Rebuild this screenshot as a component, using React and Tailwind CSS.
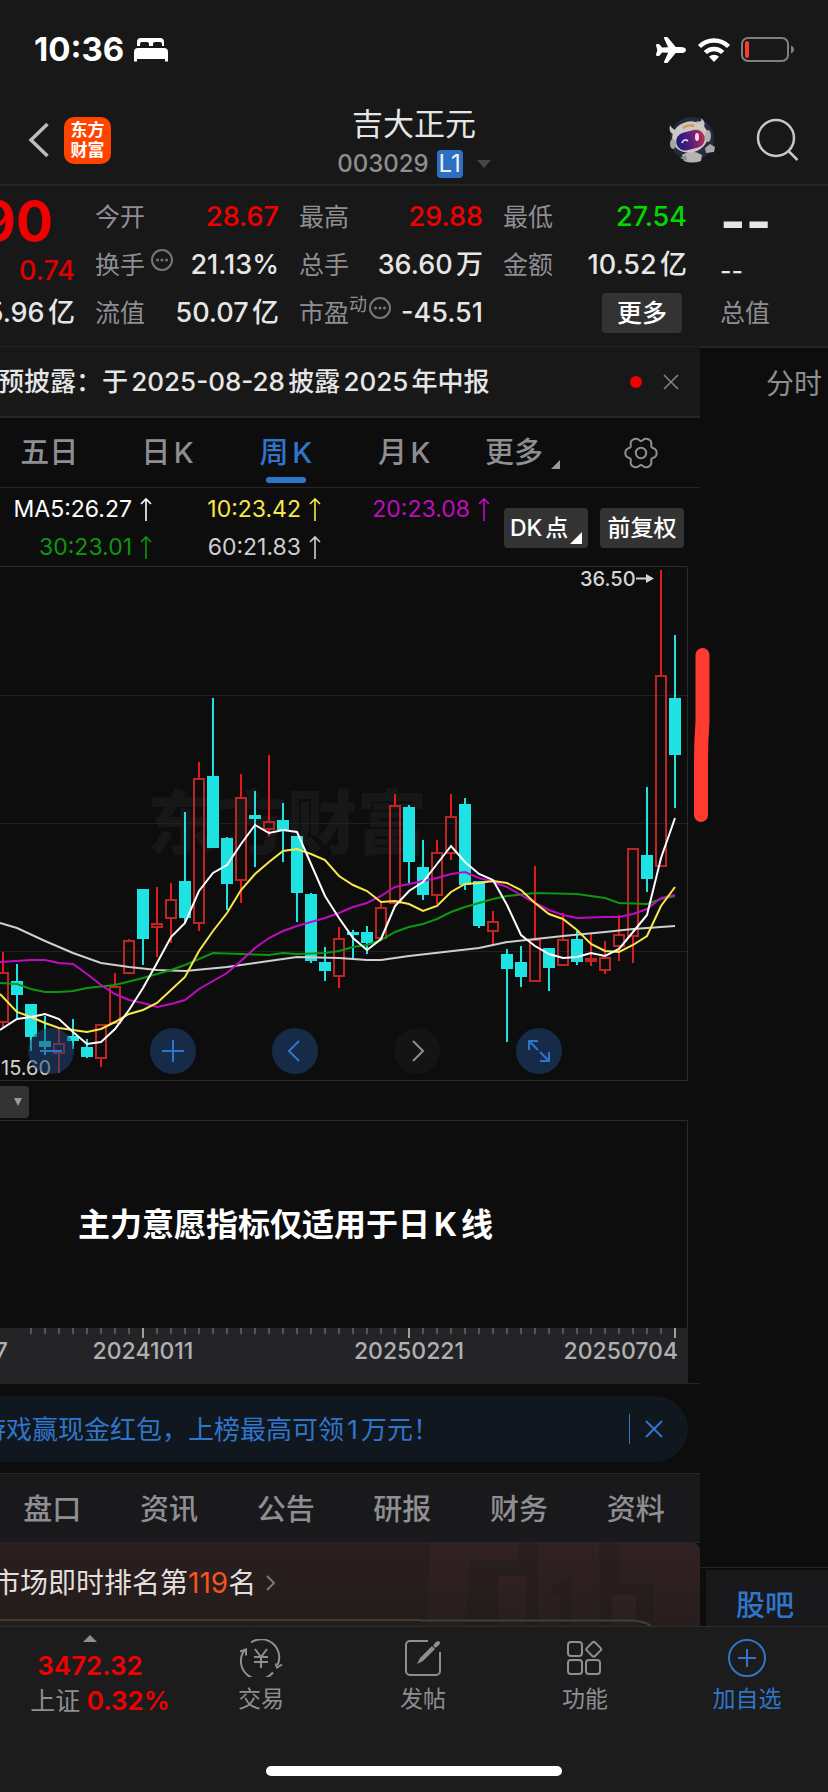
import { IoAirplane } from "react-icons/io5";

const UP = "up";
const DOWN = "down";

// [tipo, máximo, inicio del cuerpo, fin del cuerpo, mínimo]
const CANDLES = [
  [UP, 952, 972, 1023, 1028],
  [DOWN, 964, 981, 995, 1018],
  [DOWN, 1004, 1004, 1037, 1051],
  [DOWN, 1016, 1041, 1047, 1055],
  [UP, 1028, 1043, 1054, 1073],
  [DOWN, 1019, 1036, 1041, 1049],
  [DOWN, 1039, 1047, 1057, 1058],
  [UP, 1024, 1024, 1059, 1067],
  [UP, 973, 986, 1024, 1024],
  [UP, 939, 940, 974, 974],
  [DOWN, 889, 889, 939, 965],
  [UP, 887, 923, 928, 957],
  [UP, 883, 899, 919, 943],
  [DOWN, 812, 881, 918, 922],
  [UP, 762, 778, 924, 931],
  [DOWN, 698, 776, 848, 848],
  [DOWN, 837, 838, 884, 910],
  [UP, 774, 797, 881, 903],
  [DOWN, 791, 815, 819, 867],
  [UP, 755, 821, 830, 836],
  [DOWN, 803, 820, 830, 862],
  [DOWN, 836, 836, 893, 922],
  [DOWN, 893, 894, 961, 963],
  [DOWN, 947, 962, 971, 981],
  [UP, 927, 938, 977, 988],
  [DOWN, 930, 932, 935, 958],
  [DOWN, 926, 932, 943, 954],
  [UP, 901, 907, 939, 939],
  [UP, 794, 805, 904, 904],
  [DOWN, 805, 807, 862, 883],
  [DOWN, 840, 867, 895, 900],
  [UP, 840, 852, 896, 904],
  [UP, 794, 816, 854, 860],
  [DOWN, 798, 804, 885, 890],
  [DOWN, 881, 881, 926, 928],
  [UP, 911, 921, 932, 944],
  [DOWN, 949, 954, 969, 1042],
  [DOWN, 946, 962, 977, 987],
  [UP, 866, 939, 982, 982],
  [DOWN, 948, 948, 968, 991],
  [UP, 913, 939, 966, 966],
  [DOWN, 931, 939, 962, 965],
  [UP, 933, 958, 962, 966],
  [UP, 941, 957, 971, 974],
  [UP, 915, 934, 947, 961],
  [UP, 848, 848, 937, 963],
  [DOWN, 787, 855, 879, 892],
  [UP, 570, 675, 867, 867],
  [DOWN, 635, 698, 755, 808],
];

const AVERAGES = [
  {
    color: "#cfcfcf",
    points:
      "0,923 17,928 45,941 73,953 101,963 129,967 157,970 185,971 227,967 255,963 297,957 339,958 367,960 381,960 409,956 479,948 507,942 563,936 605,932 633,929 675,926",
  },
  {
    color: "#0c970c",
    points:
      "0,983 17,984 31,989 45,992 59,992 73,991 87,988 115,985 143,978 171,970 185,965 213,953 269,955 283,953 297,954 325,953 339,951 353,947 367,945 381,940 395,932 409,927 423,924 437,919 451,912 465,907 493,899 507,896 535,893 577,894 605,898 619,903 647,904 661,899 675,896",
  },
  {
    color: "#c00cc0",
    points:
      "0,962 31,960 45,960 59,963 73,964 87,974 101,985 115,994 129,1000 143,1003 157,1007 171,1004 185,1000 199,989 213,981 227,973 241,961 255,948 269,938 283,931 297,926 311,922 325,918 339,913 353,907 367,903 381,896 395,887 409,884 423,881 437,878 451,874 465,872 479,878 493,882 507,887 521,895 535,903 549,910 563,915 577,918 605,917 619,917 633,914 647,909 661,898 675,895",
  },
  {
    color: "#f8e84a",
    points:
      "0,994 17,1012 31,1017 45,1023 59,1028 73,1030 87,1032 101,1029 115,1022 129,1014 143,1010 157,1003 171,990 185,977 199,951 213,931 227,913 241,890 255,874 269,862 283,851 297,849 311,854 325,860 339,876 353,885 367,891 381,902 395,901 409,904 423,911 437,906 451,892 465,884 479,883 493,881 507,883 521,890 535,903 549,914 563,919 577,930 591,944 605,951 619,952 633,945 647,936 661,906 675,887",
  },
  {
    color: "#ffffff",
    points:
      "0,1030 17,1019 31,1017 45,1014 59,1019 73,1032 87,1044 101,1042 115,1029 129,1010 143,988 157,963 171,937 185,923 199,891 213,873 227,865 241,844 255,825 269,833 283,830 297,832 311,864 325,896 339,918 353,938 367,950 381,939 395,906 409,891 423,882 437,864 451,846 465,862 479,874 493,880 507,905 521,935 535,946 549,954 563,958 577,957 591,953 605,956 619,949 633,932 647,915 661,858 675,818",
  },
];

const candleX = (i) => 3 + i * 14;

const GEAR = Array.from({ length: 72 }, (_, i) => {
  const a = (i * Math.PI) / 36;
  const r = 14.2 + 1.8 * Math.cos(6 * a) - 0.4 * Math.cos(12 * a);
  return `${(17 + r * Math.cos(a)).toFixed(2)},${(17 + r * Math.sin(a)).toFixed(2)}`;
}).join(" ");

function StatusBar() {
  return (
    <div className="flex h-[100px] items-center justify-between pl-[34px] pr-[33px]">
      <div className="flex items-center gap-2.5 text-[33px] font-bold text-white">
        <span>10:36</span>
        <svg width="34" height="24" viewBox="0 0 34 24" fill="#fff">
          <path d="M3 8V4a4 4 0 0 1 4-4h19a4 4 0 0 1 4 4v4h-2V6q0-2-2-2h-5q-2 0-2 2v2h-4V6q0-2-2-2H8Q6 4 6 6v2z" />
          <path d="M4 10h26a4 4 0 0 1 4 4v9.500h-3V21H3v2.500H0V14a4 4 0 0 1 4-4z" />
        </svg>
      </div>
      <div className="flex items-center gap-2.5 text-white">
        <IoAirplane className="h-8 w-8" />
        <svg width="34" height="26" viewBox="0 0 34 26" fill="none" stroke="#fff" strokeWidth="4.500">
          <path d="M2.500 9.500a20.500 20.500 0 0 1 29 0" />
          <path d="M8.300 15.500a12.300 12.300 0 0 1 17.400 0" />
          <path d="M17 25l-5-5.200a7.200 7.200 0 0 1 10 0z" fill="#fff" stroke="none" />
        </svg>
        <svg width="54" height="26" viewBox="0 0 54 26">
          <rect x="1" y="1" width="46" height="23" rx="6" fill="none" stroke="#808080" strokeWidth="2" />
          <rect x="4" y="4" width="4" height="17" rx="2" fill="#ff3b30" />
          <path d="M50 8.500c4 1.500 4 6.500 0 8z" fill="#808080" />
        </svg>
      </div>
    </div>
  );
}

function Robot() {
  return (
    <svg width="48" height="46" viewBox="0 0 48 46">
      <circle cx="24" cy="22" r="22" fill="#262b3d" />
      <path d="M14 38q10-7 20 0l-1 6q-9 3-17 0z" fill="#b9b4b4" />
      <path d="M12 41l6-3 1 6z" fill="#8f8b8b" />
      <path d="M37 31l5-4 5 3-1 5-8 1z" fill="#aaa5a5" />
      <path d="M7 18Q0 16 2 8q3 6 8 5zM28 4q7 2 5-3 6 4 2 11z" fill="#c9c5c3" />
      <ellipse cx="22" cy="20" rx="18" ry="15.500" fill="#cdc8c6" transform="rotate(-14 22 20)" />
      <path d="M15 11q6-4 11-2" stroke="#c99b5a" strokeWidth="2.500" fill="none" />
      <ellipse cx="5" cy="27" rx="3" ry="5" fill="#a9a5a8" />
      <ellipse cx="40" cy="19" rx="3" ry="6" fill="#b4afb0" />
      <defs>
        <linearGradient id="visor">
          <stop offset="0" stopColor="#1c1a78" />
          <stop offset="0.500" stopColor="#5a1d80" />
          <stop offset="1" stopColor="#b8304f" />
        </linearGradient>
      </defs>
      <rect x="8" y="14" width="29" height="18" rx="9" fill="url(#visor)" transform="rotate(-14 23 23)" />
      <path d="M14 26q2-5 6-2" stroke="#dcd6ff" strokeWidth="1.800" fill="none" />
      <ellipse cx="29" cy="20" rx="2" ry="4" fill="#ffd9ee" />
    </svg>
  );
}

function Header() {
  return (
    <header className="grid h-[86px] grid-cols-3 items-center border-b-2 border-[#262626]">
      <div className="mb-1 flex items-center gap-3.5 pl-7">
        <button aria-label="返回">
          <svg width="22" height="36" viewBox="0 0 22 36" fill="none" stroke="#bdbdbd" strokeWidth="3.500">
            <path d="M19.500 2L3 18l16.500 16" />
          </svg>
        </button>
        <div className="flex h-[47px] w-[47px] flex-col items-center justify-center rounded-[10px] bg-[#ff4400] text-[17px] font-bold leading-5 text-white">
          <span>东方</span>
          <span>财富</span>
        </div>
      </div>
      <div className="flex flex-col items-center gap-2">
        <h1 className="text-[31px] leading-9 text-[#e6e6e6]">吉大正元</h1>
        <button className="flex items-center text-2xl leading-7 text-[#8e8e93]">
          <span className="font-medium">003029</span>
          <span className="ml-2 rounded bg-[#2c70c4] px-0.5 text-[#f0f0f0]">L1</span>
          <svg className="ml-3.5" width="14" height="8" viewBox="0 0 14 8" fill="#454545">
            <path d="M0 0h14L7 8z" />
          </svg>
        </button>
      </div>
      <div className="mb-1 flex items-center justify-end gap-10 pr-7">
        <Robot />
        <button aria-label="搜索">
          <svg width="44" height="44" viewBox="0 0 44 44" fill="none" stroke="#c6c6c6" strokeWidth="2.500">
            <circle cx="20" cy="20" r="18" />
            <path d="M32.500 33l9 9" />
          </svg>
        </button>
      </div>
    </header>
  );
}

function Info() {
  return (
    <svg className="mb-2.5" width="22" height="22" viewBox="0 0 22 22">
      <circle cx="11" cy="11" r="10" fill="none" stroke="#77777b" strokeWidth="2" />
      <circle cx="6.500" cy="11" r="1.500" fill="#77777b" />
      <circle cx="11" cy="11" r="1.500" fill="#77777b" />
      <circle cx="15.500" cy="11" r="1.500" fill="#77777b" />
    </svg>
  );
}

function Quote({ label, sup, info, value, color = "text-[#e6e6e6]" }) {
  return (
    <div className="flex items-center justify-between">
      <dt className="flex items-center text-[#8e8e93]">
        {label}
        {sup && <span className="mb-4 text-lg leading-5">{sup}</span>}
        {info && <span className={sup ? "ml-0.5" : "ml-1.5"}><Info /></span>}
      </dt>
      <dd className={`text-[27px] font-medium [text-autospace:normal] ${color}`}>{value}</dd>
    </div>
  );
}

function QuotePanel() {
  return (
    <section className="flex gap-5 border-b border-[#262626] bg-[#181818] pb-[9px] pr-[13px] pt-[7px] text-[25px] leading-[48px]">
      <div className="flex w-[75px] shrink-0 flex-col items-end whitespace-nowrap">
        <span className="mr-[22px] h-14 text-[55px] font-bold leading-14 text-[#f00000]">90</span>
        <span className="h-11 text-[27px] font-medium leading-11 text-[#e00000]">0.74</span>
        <span className="h-10 text-[27px] font-medium leading-10 text-[#e6e6e6] [text-autospace:normal]">5.96亿</span>
      </div>
      <dl className="min-w-0 flex-1">
        <Quote label="今开" value="28.67" color="text-[#f00000]" />
        <Quote label="换手" info value="21.13%" />
        <Quote label="流值" value="50.07亿" />
      </dl>
      <dl className="min-w-0 flex-1">
        <Quote label="最高" value="29.88" color="text-[#f00000]" />
        <Quote label="总手" value="36.60万" />
        <Quote label="市盈" sup="动" info value="-45.51" />
      </dl>
      <div className="min-w-0 flex-1">
        <dl>
          <Quote label="最低" value="27.54" color="text-[#00d800]" />
          <Quote label="金额" value="10.52亿" />
        </dl>
        <div className="flex h-12 items-center justify-end pr-[5px]">
          <button className="h-10 w-20 rounded bg-[#333333] font-medium leading-10 text-white">更多</button>
        </div>
      </div>
    </section>
  );
}

function Notice() {
  return (
    <section className="flex h-[71px] items-center border-b-2 border-[#262626] bg-[#181818] pr-5">
      <p className="-ml-0.5 flex-1 whitespace-nowrap text-[26px] font-medium text-[#e6e6e6] [text-autospace:normal]">
        预披露：于2025-08-28披露2025年中报
      </p>
      <span className="mr-5 h-3 w-3 rounded-full bg-[#f00000]" />
      <button aria-label="关闭">
        <svg width="18" height="18" viewBox="0 0 18 18" stroke="#858585" strokeWidth="1.500">
          <path d="M2 2l14 14M16 2L2 16" />
        </svg>
      </button>
    </section>
  );
}

function PeriodTabs() {
  return (
    <nav className="border-b border-[#262626]">
      <div className="-ml-2.5 grid h-[69px] grid-cols-6 text-[29px] font-medium text-[#8e8e93] [text-autospace:normal]">
        <button>五日</button>
        <button>日K</button>
        <button className="relative text-[#2f76cb]">
          周K
          <span className="absolute bottom-1 left-1/2 h-1.5 w-10 -translate-x-1/2 rounded-full bg-[#2f76cb]" />
        </button>
        <button>月K</button>
        <button className="flex items-center justify-center gap-2">
          更多
          <svg className="mt-6" width="9" height="9" viewBox="0 0 9 9" fill="#9a9a9e">
            <path d="M9 0v9H0z" />
          </svg>
        </button>
        <button aria-label="设置" className="flex items-center justify-center">
          <svg width="34" height="34" viewBox="0 0 34 34" fill="none" stroke="#8e8e93" strokeWidth="2">
            <polygon points={GEAR} strokeLinejoin="round" />
            <circle cx="17" cy="17" r="5.200" />
          </svg>
        </button>
      </div>
    </nav>
  );
}

function Average({ children, color }) {
  return (
    <span className={`flex items-center justify-end gap-2 ${color}`}>
      {children}
      <svg width="12" height="24" viewBox="0 0 12 24" fill="none" stroke="currentColor" strokeWidth="1.600">
        <path d="M6 24V2M1 7l5-5 5 5" />
      </svg>
    </span>
  );
}

function AveragesBar() {
  return (
    <section className="flex h-[78px] items-center pt-0.5">
      <div className="grid grid-cols-[152px_169px_169px] whitespace-nowrap text-[23px] leading-[38px]">
        <Average color="text-white">MA5:26.27</Average>
        <Average color="text-[#f8e84a]">10:23.42</Average>
        <Average color="text-[#c00cc0]">20:23.08</Average>
        <Average color="text-[#0c970c]">30:23.01</Average>
        <Average color="text-[#cfcfcf]">60:21.83</Average>
      </div>
      <div className="ml-3.5 flex gap-3 text-[23px] font-medium leading-10 text-white">
        <button className="relative h-10 w-[84px] rounded bg-[#333333] pl-1.5 text-left [text-autospace:normal]">
          DK点
          <svg className="absolute bottom-1 right-1.5" width="12" height="12" viewBox="0 0 12 12" fill="#fff">
            <path d="M12 0v12H0z" />
          </svg>
        </button>
        <button className="h-10 w-[84px] rounded bg-[#333333]">前复权</button>
      </div>
    </section>
  );
}

function RoundButton({ label, muted, children }) {
  return (
    <button
      aria-label={label}
      className={`flex h-[46px] w-[46px] items-center justify-center rounded-full ${
        muted ? "bg-[#141414] text-[#8e8e93]" : "bg-[#1f4679]/55 text-[#2f76cb]"
      }`}
    >
      <svg width="26" height="26" viewBox="0 0 26 26" fill="none" stroke="currentColor" strokeWidth="2">
        {children}
      </svg>
    </button>
  );
}

function Chart() {
  return (
    <section className="relative pr-3">
      <svg className="block w-full" viewBox="0 566 688 515">
        <text x="147" y="849" fill="#171717" fontSize="70" fontWeight="900">
          东方财富
        </text>
        <g stroke="#202020">
          <path d="M0 695.500h687M0 823.500h687M0 951.500h687" />
          <path d="M0 566.500h687.500v514H0" fill="none" stroke="#2a2a2a" />
        </g>
        {CANDLES.map(([kind, high, top, bottom, low], i) =>
          kind === UP ? (
            <g key={i}>
              <path d={`M${candleX(i)} ${high}V${top}M${candleX(i)} ${bottom}V${low}`} stroke="#e31a1a" strokeWidth="2" />
              <rect
                x={candleX(i) - 5}
                y={top + 1}
                width="10"
                height={bottom - top - 2}
                fill="none"
                stroke="#bd2525"
                strokeWidth="2"
              />
            </g>
          ) : (
            <g key={i} fill="#1fe3e3">
              <rect x={candleX(i) - 1} y={high} width="2" height={low - high} />
              <rect x={candleX(i) - 6} y={top} width="12" height={bottom - top} />
            </g>
          )
        )}
        {AVERAGES.map((line) => (
          <polyline key={line.color} points={line.points} fill="none" stroke={line.color} strokeWidth="2" />
        ))}
        <g fill="#d4d4d4" fontSize="20">
          <text x="580" y="586" fontWeight="500">36.50</text>
          <text x="1" y="1075">15.60</text>
        </g>
        <path d="M636 578.500h11" stroke="#d4d4d4" strokeWidth="2" />
        <path d="M646 574l8 4.500-8 4.500z" fill="#d4d4d4" />
      </svg>
      <div className="absolute bottom-[7px] left-7 flex gap-[76px]">
        <RoundButton label="缩小">
          <path d="M2 13h22" />
        </RoundButton>
        <RoundButton label="放大">
          <path d="M2 13h22M13 2v22" />
        </RoundButton>
        <RoundButton label="左移">
          <path d="M17 3L7 13l10 10" />
        </RoundButton>
        <RoundButton label="右移" muted>
          <path d="M9 3l10 10L9 23" />
        </RoundButton>
        <RoundButton label="全屏">
          <path d="M3 12V3h9M3 3l9 9M14 23h9v-9M23 23l-9-9" />
        </RoundButton>
      </div>
    </section>
  );
}

function Indicator() {
  return (
    <section className="border-b border-[#262626]">
      <div className="flex h-[39px] items-center">
        <button
          aria-label="指标"
          className="mt-0.5 flex h-8 w-[29px] items-center justify-end rounded-r bg-[#333333] pr-[7px]"
        >
          <svg width="8" height="8" viewBox="0 0 8 8" fill="#9a9a9e">
            <path d="M0 0h8L4 8z" />
          </svg>
        </button>
      </div>
      <div className="mr-3 flex h-52 items-center justify-center border-r border-t border-[#2a2a2a] pr-[116px]">
        <p className="whitespace-nowrap text-[32px] font-bold text-white [text-autospace:normal]">
          主力意愿指标仅适用于日K线
        </p>
      </div>
      <div className="mr-3 bg-[#242427]">
        <svg className="block w-full" viewBox="0 0 688 55">
          {CANDLES.map((_, i) => {
            const major = (i - 10) % 19 === 0;
            return (
              i > 1 && (
                <path
                  key={i}
                  d={`M${candleX(i)} 0v${major ? 10 : 6}`}
                  stroke={major ? "#a0a0a0" : "#55555a"}
                  strokeWidth="2"
                />
              )
            );
          })}
          <g fill="#b0b0b3" fontSize="23" fontWeight="500">
            <text x="8" y="31" textAnchor="end">7</text>
            <text x="143" y="31" textAnchor="middle">20241011</text>
            <text x="409" y="31" textAnchor="middle">20250221</text>
            <text x="678" y="31" textAnchor="end">20250704</text>
          </g>
        </svg>
      </div>
    </section>
  );
}

function Promo() {
  return (
    <section className="mb-[11px] mr-3 mt-3 flex h-[66px] items-center overflow-hidden rounded-r-full bg-[#10171e] pr-6 text-[#2f76cb]">
      <p className="-ml-5 flex-1 whitespace-nowrap text-[26px] [text-autospace:normal]">
        游戏赢现金红包，上榜最高可领1万元！
      </p>
      <span className="mr-3.5 h-[30px] w-px bg-[#2f76cb]" />
      <button aria-label="关闭">
        <svg width="20" height="20" viewBox="0 0 20 20" stroke="currentColor" strokeWidth="2">
          <path d="M2 2l16 16M18 2L2 18" />
        </svg>
      </button>
    </section>
  );
}

function DetailTabs() {
  return (
    <nav className="border-y border-[#262626] bg-[#19191b]">
      <div className="-ml-1.5 mr-1.5 grid h-[68px] grid-cols-6 pt-1 text-[29px] font-medium text-[#8e8e93]">
        <button>盘口</button>
        <button>资讯</button>
        <button>公告</button>
        <button>研报</button>
        <button>财务</button>
        <button>资料</button>
      </div>
    </nav>
  );
}

function RankBanner() {
  return (
    <section className="relative flex h-[83px] items-center overflow-hidden rounded-tr-lg bg-linear-to-b from-[#2a1f1e] to-[#231c1b]">
      <svg className="absolute right-0 top-0" width="280" height="83" viewBox="0 0 280 83">
        <defs>
          <linearGradient id="deco" x2="0" y2="1">
            <stop offset="0" stopColor="#322122" />
            <stop offset="1" stopColor="#281e1d" />
          </linearGradient>
        </defs>
        <g fill="url(#deco)">
          <path d="M11 0h88l-2 18H50l-6 65H7z" />
          <path d="M79 33h27v50H78z" />
          <path d="M118 0h61v83h-28V34l-18 7v12h7v30h-22z" />
          <path d="M200 0h80v83h-46V40h-34z" />
          <path d="M192 52h24v31h-24z" />
        </g>
        <path d="M0 77.500h210q14 0 22 6" fill="none" stroke="#35453b" strokeWidth="2" />
      </svg>
      <svg className="absolute bottom-[5px] left-0 w-[60%]" height="2" preserveAspectRatio="none" viewBox="0 0 420 2">
        <path d="M0 1h420" stroke="#3f3a33" strokeWidth="2" />
      </svg>
      <a href="#rank" className="relative -ml-2 mb-1 flex items-center gap-2.5 whitespace-nowrap text-[28px] text-[#e3dfde]">
        <span>
          市场即时排名第<b className="font-normal text-[#f4551c]">119</b>名
        </span>
        <svg width="10" height="16" viewBox="0 0 10 16" fill="none" stroke="#7d7776" strokeWidth="2">
          <path d="M1 1l7 7-7 7" />
        </svg>
      </a>
    </section>
  );
}

function NextStock() {
  return (
    <aside className="flex w-32 shrink-0 flex-col overflow-hidden">
      <div className="flex flex-col items-start border-b-2 border-[#262626] bg-[#181818] pb-[13px] pl-5 pt-[7px] text-[25px]">
        <span className="h-14 text-[55px] font-bold leading-14 text-[#e6e6e6]">--</span>
        <span className="h-11 font-medium leading-11 text-[#e6e6e6]">--</span>
        <span className="h-10 leading-10 text-[#8e8e93]">总值</span>
      </div>
      <button className="ml-[66px] mt-4 self-start whitespace-nowrap text-[28px] leading-10 text-[#8e8e93]">分时</button>
      <div className="mt-auto border-t border-[#262626] pl-1.5 pt-0.5">
        <button className="block h-14 w-full bg-[#19191b] pl-[30px] pt-4 text-left text-[29px] font-medium leading-10 text-[#2f76cb]">
          股吧
        </button>
      </div>
    </aside>
  );
}

function NavItem({ label, active, children }) {
  return (
    <button
      className={`flex flex-1 flex-col items-center pt-3 text-[23px] leading-9 ${
        active ? "text-[#2f76cb]" : "text-[#8e8e93]"
      }`}
    >
      <svg width="44" height="38" viewBox="0 0 44 38" fill="none" stroke="currentColor" strokeWidth="2">
        {children}
      </svg>
      <span className="mt-1">{label}</span>
    </button>
  );
}

function BottomNav() {
  return (
    <footer className="border-t border-[#2c2c2c] bg-[#1c1c1c]">
      <nav className="flex h-[92px]">
        <button className="flex w-[180px] flex-col items-center pt-2 text-[26px] font-semibold leading-[35px] text-[#f00000]">
          <svg className="mb-1.5" width="14" height="7" viewBox="0 0 14 7" fill="#8e8e93">
            <path d="M7 0l7 7H0z" />
          </svg>
          <span>3472.32</span>
          <span className="ml-5">
            <span className="text-[25px] font-normal text-[#8e8e93]">上证</span> 0.32%
          </span>
        </button>
        <NavItem label="交易">
          <path d="M12 3.500A18 18 0 0 1 38.500 26M34 33.500A18 18 0 0 1 6 10.500" />
          <path d="M1 12.500l6-2v6M43 25.500l-5 3-1.500-4" />
          <path d="M16 10l6 8 6-8M15 18h14M15 23h14M22 18v11" />
        </NavItem>
        <NavItem label="发帖">
          <path d="M27 2H9a4 4 0 0 0-4 4v26a4 4 0 0 0 4 4h26a4 4 0 0 0 4-4V13" />
          <path d="M16 25l3-6L31 7l3 3-12 12z" fill="currentColor" stroke="none" />
          <path d="M34.500 6.500l2.500-2.500" strokeWidth="4" strokeLinecap="round" />
        </NavItem>
        <NavItem label="功能">
          <rect x="5" y="3" width="14" height="14" rx="3" />
          <rect x="5" y="21" width="14" height="14" rx="3" />
          <rect x="23" y="21" width="14" height="14" rx="3" />
          <rect x="25" y="4.500" width="11.500" height="11.500" rx="2" transform="rotate(45 30.750 10.250)" />
        </NavItem>
        <NavItem label="加自选" active>
          <circle cx="22" cy="19" r="18" />
          <path d="M13 19h18M22 10v18" />
        </NavItem>
      </nav>
      <div className="mx-auto mb-4 mt-[47px] h-2.5 w-[296px] rounded-full bg-white" />
    </footer>
  );
}

export default function App() {
  return (
    <div className="flex min-h-screen flex-col overflow-hidden bg-[#181818] font-['Inter','Noto_Sans_CJK_SC',sans-serif]">
      <StatusBar />
      <Header />
      <main className="relative flex flex-1 bg-[#0d0d0d]">
        <div className="min-w-0 flex-1 overflow-hidden">
          <QuotePanel />
          <Notice />
          <PeriodTabs />
          <AveragesBar />
          <Chart />
          <Indicator />
          <Promo />
          <DetailTabs />
          <RankBanner />
        </div>
        <NextStock />
        {/* Trazo a mano sobre el borde del gráfico */}
        <svg className="absolute right-[116px] top-[460px]" width="20" height="178" viewBox="0 0 20 178">
          <path d="M10.500 9V75Q9 95 9 115V169" fill="none" stroke="#ff3b30" strokeWidth="14" strokeLinecap="round" />
        </svg>
      </main>
      <BottomNav />
    </div>
  );
}
